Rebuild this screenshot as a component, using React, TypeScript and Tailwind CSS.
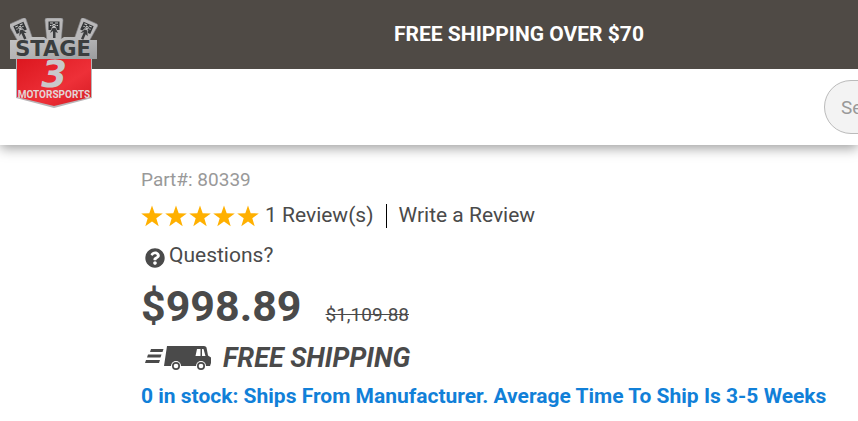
import { FaQuestionCircle } from "react-icons/fa";

const stars = [1, 2, 3, 4, 5];

function Star() {
    return (
        <svg viewBox="0 0 22 22" className="size-[22px]" fill="#ffb000">
            <path d="M11 0.500L13.700 8.200L21.800 8.400L15.300 13.300L17.700 21.200L11 16.400L4.300 21.200L6.700 13.300L0.200 8.400L8.300 8.200Z" />
        </svg>
    );
}

function Piston({ transform }: { transform: string }) {
    return (
        <g transform={transform}>
            <path d="M-9-8Q-9-10-7-10H7Q9-10 9-8L7 14H-7Z" fill="#b9b8b9" stroke="#85868a" strokeWidth=".6" />
            <path d="M-5.500-6.500H5.500V2H3L2-1H-2L-3 2H-5.500Z" fill="#343638" />
            <path d="M-4-5H-1M1-5H4M-4-2.500H-2.500M2.500-2.500H4" stroke="#c9c9c9" strokeWidth="1" />
            <circle cy="-2.500" r="1.700" fill="#d4d4d4" />
            <circle cy="-2.500" r=".7" fill="#343638" />
            <path d="M-1.500 0L-4 5L-1 3V10H1.500V4L4 5L1.500 0Z" fill="#3b3c3e" />
        </g>
    );
}

function Logo() {
    return (
        <svg viewBox="0 0 88 90" className="h-[90px] w-[88px]" role="img" aria-label="Stage 3 Motorsports">
            <defs>
                <linearGradient id="steel" x1="0" y1="0" x2="1" y2="1">
                    <stop offset="0" stopColor="#c4c4c5" />
                    <stop offset=".5" stopColor="#b4b4b5" />
                    <stop offset="1" stopColor="#9b9c9e" />
                </linearGradient>
                <linearGradient id="shield" x1="0" y1="0" x2="1" y2="1">
                    <stop offset="0" stopColor="#dc171f" />
                    <stop offset=".6" stopColor="#ee3038" />
                    <stop offset="1" stopColor="#d51a22" />
                </linearGradient>
            </defs>
            <Piston transform="translate(11 12) rotate(-24)" />
            <Piston transform="translate(44 10)" />
            <Piston transform="translate(76 12) rotate(24)" />
            <path d="M6 39H82V80L44 90L6 80Z" fill="#b9b5b8" />
            <path d="M7 41H81V79L44 88L7 79Z" fill="url(#shield)" />
            <path d="M0 22H17L21 19H34L37 21H51L54 19H66L70 22H87V41H0Z" fill="url(#steel)" />
            <text x="43" y="38" textAnchor="middle" fontFamily="DejaVu Sans" fontWeight="700" fontSize="21" fill="#3a3e3f">STAGE</text>
            <text x="44" y="69" textAnchor="middle" fontFamily="DejaVu Sans" fontWeight="700" fontStyle="italic" fontSize="37" fill="#c9c8ca">3</text>
            <text x="44" y="80" textAnchor="middle" fontFamily="Roboto, sans-serif" fontWeight="700" fontSize="10" fill="#e3d5d6">MOTORSPORTS</text>
        </svg>
    );
}

function Truck() {
    return (
        <svg viewBox="0 0 68 26" className="h-[26px] w-[68px]" fill="#4a4a4a" aria-hidden="true">
            <path d="M6 4H18.500L17.500 7H5ZM3 9.500H16.500L15.500 12.500H2ZM1 15H15L14 18H0Z" />
            <path d="M22 1H59Q61 1 61.500 2.500L63 10.500L66 12.500V18L65 21H19Z" />
            <path d="M52 4H55.500V11H50.500ZM57 4H58.500L60.500 11H57Z" fill="#fff" />
            <circle cx="31" cy="21" r="5" fill="#fff" />
            <circle cx="31" cy="21" r="4" />
            <circle cx="31" cy="21" r="2.300" fill="#fff" />
            <circle cx="56" cy="21" r="5" fill="#fff" />
            <circle cx="56" cy="21" r="4" />
            <circle cx="56" cy="21" r="2.300" fill="#fff" />
        </svg>
    );
}

function Header() {
    return (
        <header className="relative shadow-[0_3px_12px_rgba(0,0,0,0.4)]">
            <div className="flex h-[69px] items-center justify-center bg-[#4f4a45] pl-[180px] text-[21px] font-bold text-white">
                FREE SHIPPING OVER $70
            </div>
            <div className="flex h-[76px] items-center justify-end overflow-hidden bg-white">
                <input
                    type="search"
                    aria-label="Search"
                    placeholder="Search"
                    className="-mr-[222px] h-[54px] w-64 shrink-0 rounded-full border border-[#bbb] bg-[#f3f3f3] px-4 text-[19px] placeholder:text-[#999]"
                />
            </div>
            <a href="#" className="absolute top-[18px] left-[10px]">
                <Logo />
            </a>
        </header>
    );
}

export default function App() {
    return (
        <div className="min-h-screen overflow-hidden bg-white font-[Roboto,sans-serif] text-[#4a4a4a]">
            <Header />
            <main className="pt-[21px] pl-[141px]">
                <p className="text-[19px] leading-7 text-[#999]">Part#: 80339</p>

                {/* Reviews */}
                <div className="mt-2 flex h-7 items-center text-[21px]">
                    <div className="flex gap-0.5" role="img" aria-label="5 out of 5 stars">
                        {stars.map((star) => (
                            <Star key={star} />
                        ))}
                    </div>
                    <a href="#reviews" className="ml-1.5">1 Review(s)</a>
                    <span className="mx-3 h-6 w-px bg-black" />
                    <a href="#write">Write a Review</a>
                </div>

                <a href="#questions" className="mt-3 flex h-7 w-fit items-center gap-1 pl-1 text-[21px]">
                    <FaQuestionCircle className="mt-1 size-5" />
                    Questions?
                </a>

                {/* Price */}
                <div className="mt-2.5 flex items-baseline gap-6">
                    <span className="text-[43px] leading-[52px] font-bold">$998.89</span>
                    <s className="text-[19px]">$1,109.88</s>
                </div>

                <div className="mt-2 flex h-9 items-center gap-2.5 pl-1">
                    <Truck />
                    <span className="text-[27px] font-bold italic">FREE SHIPPING</span>
                </div>

                <p className="mt-1.5 text-[21px] leading-7 font-bold whitespace-nowrap text-[#1180d8]">
                    0 in stock: Ships From Manufacturer. Average Time To Ship Is 3-5 Weeks
                </p>
            </main>
        </div>
    );
}
